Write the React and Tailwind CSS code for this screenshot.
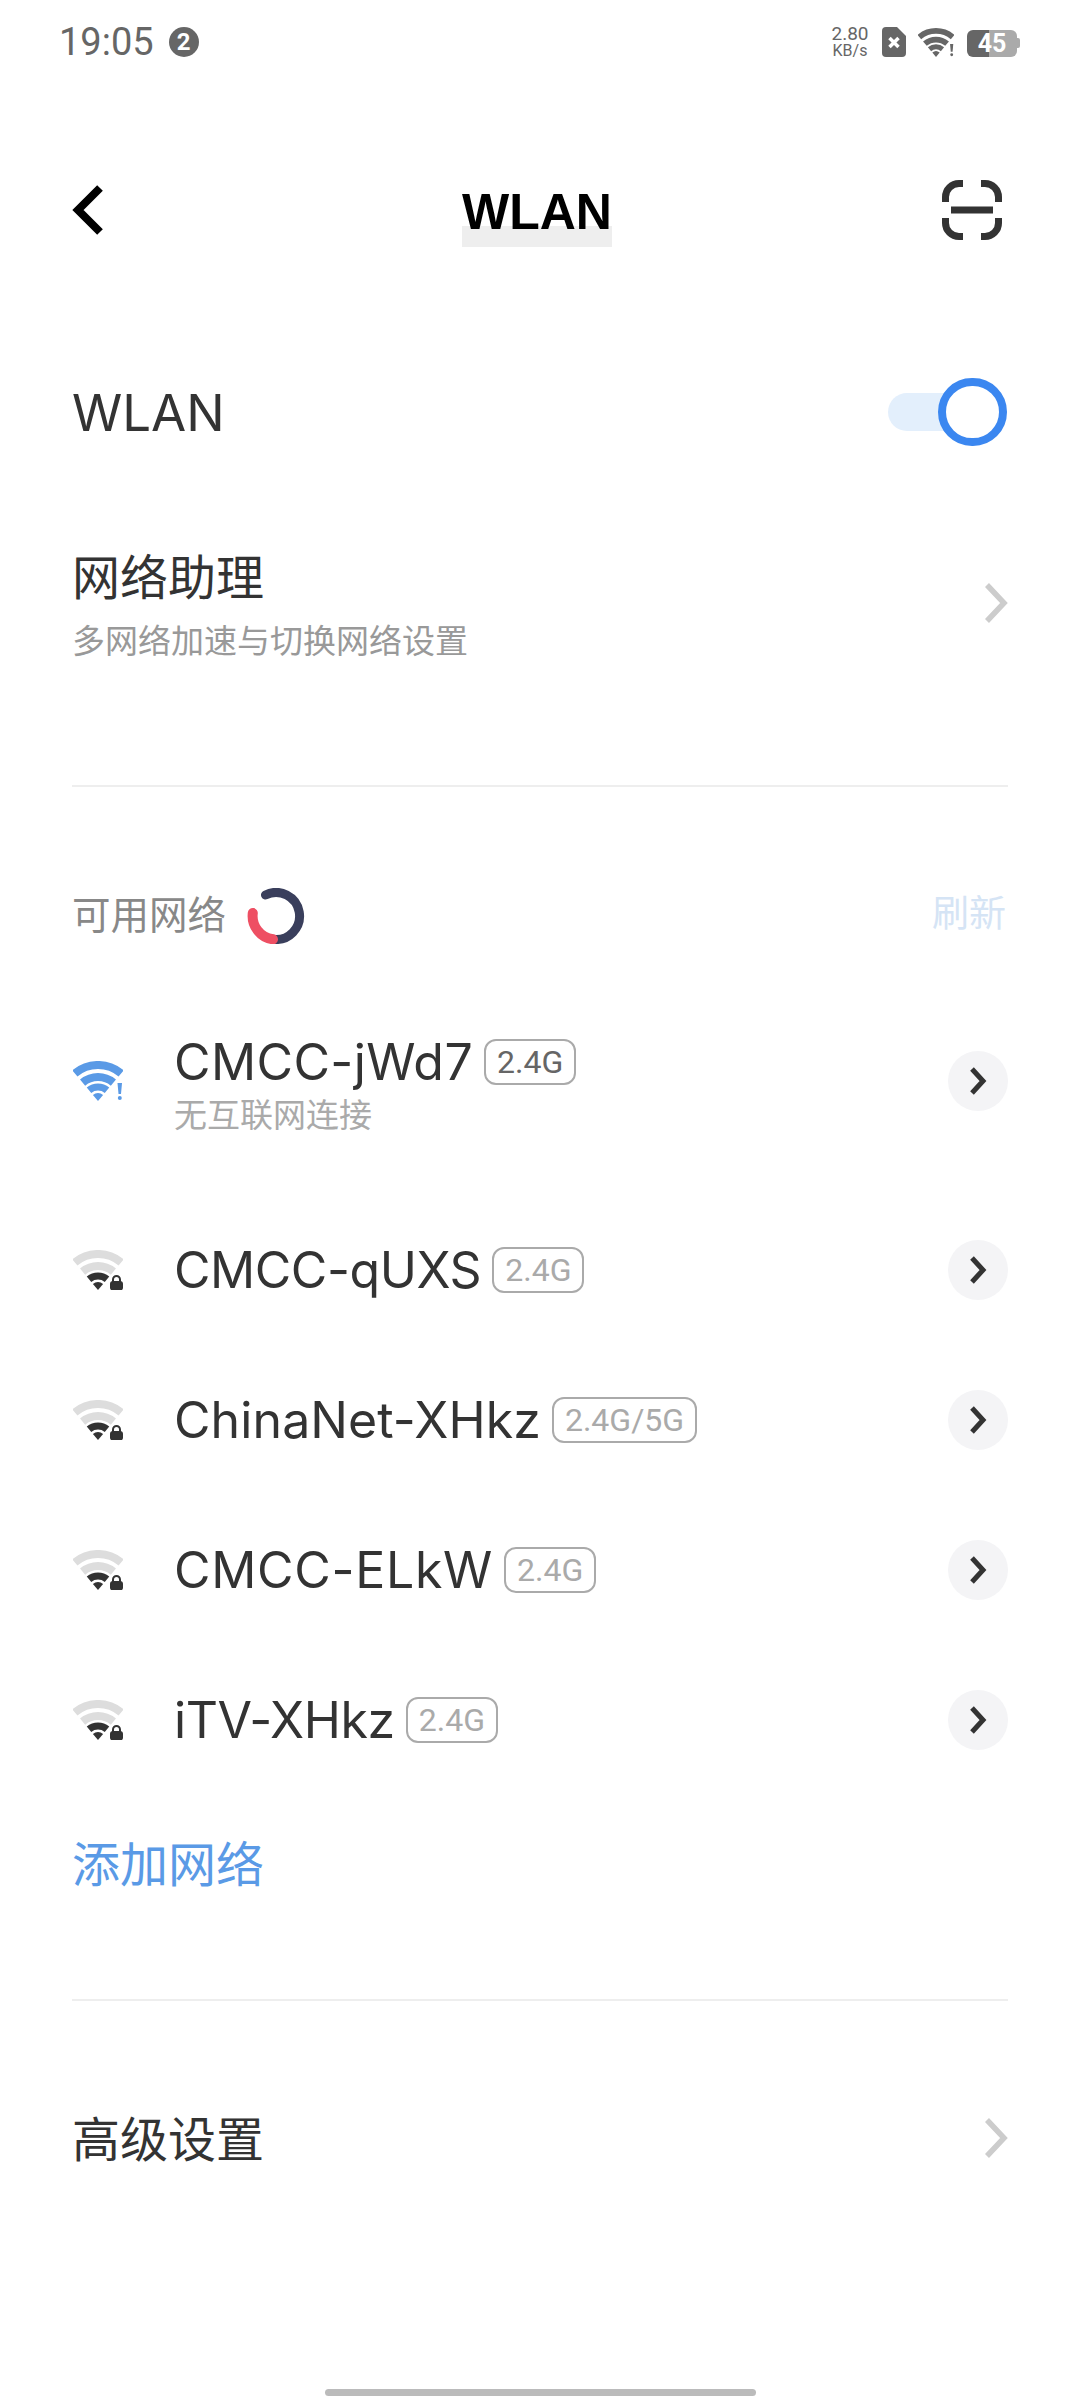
import React from "react";

const networks = [
  { name: "CMCC-qUXS", band: "2.4G", spacing: "tracking-[-0.45px]" },
  { name: "ChinaNet-XHkz", band: "2.4G/5G", spacing: "tracking-[0.1px]" },
  { name: "CMCC-ELkW", band: "2.4G", spacing: "tracking-[0.7px]" },
  { name: "iTV-XHkz", band: "2.4G", spacing: "tracking-[-0.4px]" },
];

const WifiBars = ({ top, low, children, className }) => (
  <svg viewBox="0 0 50 40" className={className}>
    <path d="M1.85 12.4A36 36 0 0 1 48.15 12.4" fill="none" stroke={top} strokeWidth="8" />
    <path d="M9.6 21.6A24 24 0 0 1 40.4 21.6" fill="none" stroke={top} strokeWidth="8" />
    <path d="M16 29.3A14 14 0 0 1 34 29.3" fill="none" stroke={low} strokeWidth="7" />
    <path d="M25 40L19.9 33.9A8 8 0 0 1 30.1 33.9Z" fill={low} />
    {children}
  </svg>
);

const Alert = ({ color }) => (
  <>
    <path d="M44.5 22H49L48 33H45.5Z" fill={color} />
    <circle cx="46.8" cy="37" r="2" fill={color} />
  </>
);

const Lock = () => (
  <>
    <path d="M40 32V29.5A3.5 3.5 0 0 1 47 29.5V32" fill="none" stroke="#333" strokeWidth="2" />
    <rect x="37" y="31" width="13" height="9.5" rx="3" fill="#333" />
  </>
);

const Tag = ({ children, dark }) => (
  <span
    className={`ml-[11px] flex h-[46px] items-center rounded-[12px] border-2 border-[#aaaaaa] px-[11px] font-['Roboto',sans-serif] text-[32px] ${
      dark ? "text-[#666666]" : "text-[#aaaaaa]"
    }`}
  >
    {children}
  </span>
);

const RoundArrow = () => (
  <span className="flex h-[60px] w-[60px] items-center justify-center rounded-full bg-[#f4f4f6]">
    <svg viewBox="0 0 20 30" className="h-[30px] w-[20px]">
      <path d="M4 3L15 15L4 27" fill="none" stroke="#333" strokeWidth="5" />
    </svg>
  </span>
);

const GrayArrow = () => (
  <svg viewBox="0 0 24 40" className="h-[40px] w-[24px]">
    <path d="M3 2L20 20L3 38" fill="none" stroke="#cccccc" strokeWidth="5.5" />
  </svg>
);

const App = () => {
  return (
    <div className="flex h-[2400px] w-[1080px] flex-col overflow-hidden bg-white font-['Inter','Noto_Sans_CJK_SC',sans-serif] text-[#333333]">
      {/* status bar */}
      <div className="flex h-[84px] items-center justify-between pl-[59px] pr-[60px] text-[#666666]">
        <div className="flex items-center">
          <span className="text-[38px] font-['Roboto',sans-serif]">19:05</span>
          <span className="ml-[15px] flex h-[30px] w-[30px] items-center justify-center rounded-full bg-[#666666] text-[24px] font-bold leading-none text-white font-['Roboto',sans-serif]">
            2
          </span>
        </div>
        <div className="flex items-center font-['Roboto',sans-serif]">
          <div className="flex w-[38px] flex-col items-center">
            <span className="text-[19px] leading-[18px]">2.80</span>
            <span className="text-[16px] leading-[16px]">KB/s</span>
          </div>
          <svg viewBox="0 0 24 30" className="ml-[13px] h-[30px] w-[24px]">
            <path d="M4 0H15L24 9V26A4 4 0 0 1 20 30H4A4 4 0 0 1 0 26V4A4 4 0 0 1 4 0Z" fill="#666" />
            <path d="M7.5 11L16.5 20M16.5 11L7.5 20" stroke="#fff" strokeWidth="3.5" />
          </svg>
          <WifiBars top="#666" low="#666" className="ml-[12px] h-[29px] w-[36px]">
            <Alert color="#666" />
          </WifiBars>
          <div className="ml-[13px] mt-[2px] flex items-center">
            <div className="flex h-[27px] w-[50px] items-center justify-center rounded-[6px] bg-[linear-gradient(to_right,#666666_44%,#aaaaaa_44%)] text-[25px] font-bold leading-none text-white">
              45
            </div>
            <span className="h-[10px] w-[3px] rounded-r-[2px] bg-[#aaaaaa]" />
          </div>
        </div>
      </div>

      {/* header */}
      <div className="mt-[66px] grid h-[120px] grid-cols-[1fr_auto_1fr] items-center pl-[72px] pr-[78px]">
        <svg viewBox="0 0 32 50" className="h-[50px] w-[32px]">
          <path d="M28 3L6 25L28 47" fill="none" stroke="#000" strokeWidth="8" />
        </svg>
        <h1 className="mt-[14px] flex flex-col text-[50px] font-bold text-black font-['Liberation_Sans',sans-serif]">
          <span className="relative z-10 leading-[50px]">WLAN</span>
          <span className="mt-[-11px] block h-[21px] w-full bg-[#eeeeee]" />
        </h1>
        <svg viewBox="0 0 60 60" className="h-[60px] w-[60px] justify-self-end">
          <g fill="none" stroke="#333" strokeWidth="7">
            <path d="M21 3.5H17A13.5 13.5 0 0 0 3.5 17V22" />
            <path d="M39 3.5H43A13.5 13.5 0 0 1 56.5 17V22" />
            <path d="M21 56.5H17A13.5 13.5 0 0 1 3.5 43V38" />
            <path d="M39 56.5H43A13.5 13.5 0 0 0 56.5 43V38" />
            <path d="M9 30H51" />
          </g>
        </svg>
      </div>

      {/* wlan switch */}
      <div className="mt-[83px] flex h-[120px] items-center justify-between pl-[72px] pr-[73px]">
        <span className="text-[51px]">WLAN</span>
        <div className="relative mb-[3px] h-[68px] w-[119px]">
          <span className="absolute left-0 top-[15px] h-[38px] w-[80px] rounded-full bg-[#e3effc]" />
          <span className="absolute right-0 top-0 h-[68px] w-[69px] rounded-full border-[8px] border-[#3b87f0] bg-white" />
        </div>
      </div>

      {/* network assistant */}
      <div className="mt-[50px] flex h-[160px] items-center justify-between pl-[72px] pr-[72px]">
        <div className="flex flex-col">
          <span className="text-[48px] leading-[76px]">网络助理</span>
          <span className="text-[33px] leading-[50px] text-[#999999]">多网络加速与切换网络设置</span>
        </div>
        <GrayArrow />
      </div>

      <div className="mx-[72px] mt-[102px] h-[2px] bg-[#eeeeee]" />

      {/* available networks */}
      <div className="mt-[82px] flex h-[90px] items-center justify-between pl-[72px] pr-[74px]">
        <div className="mt-[4px] flex items-center">
          <span className="text-[38.5px] text-[#888888]">可用网络</span>
          <svg viewBox="0 0 58 56" className="ml-[21px] h-[56px] w-[58px]">
            <path d="M18.5 7A23.5 23.5 0 1 1 26 51.3" fill="none" stroke="#3a3f5c" strokeWidth="9" strokeLinecap="round" />
            <path d="M26 51.3A23.5 23.5 0 0 1 5.8 25" fill="none" stroke="#ee4f63" strokeWidth="10" strokeLinecap="round" />
          </svg>
        </div>
        <span className="text-[37px] text-[#d5e4f5]">刷新</span>
      </div>

      <div className="mt-[36px] flex h-[172px] items-center pl-[73px] pr-[72px]">
        <WifiBars top="#5a9ae6" low="#5a9ae6" className="h-[40px] w-[50px]">
          <Alert color="#5a9ae6" />
        </WifiBars>
        <div className="ml-[51px] flex flex-1 flex-col">
          <div className="flex items-center">
            <span className="text-[50px] leading-[68px] tracking-[0.4px]">CMCC-jWd7</span>
            <Tag dark>2.4G</Tag>
          </div>
          <span className="text-[33px] leading-[38px] text-[#aaaaaa]">无互联网连接</span>
        </div>
        <RoundArrow />
      </div>

      <div className="mt-[28px] flex flex-col">
        {networks.map((n) => (
          <div key={n.name} className="flex h-[150px] items-center pl-[73px] pr-[72px]">
            <WifiBars top="#dddddd" low="#333" className="h-[40px] w-[50px]">
              <Lock />
            </WifiBars>
            <div className="ml-[51px] flex flex-1 items-center">
              <span className={`text-[50px] leading-[56px] ${n.spacing}`}>{n.name}</span>
              <Tag>{n.band}</Tag>
            </div>
            <RoundArrow />
          </div>
        ))}
      </div>

      <div className="mt-[22px] flex h-[96px] items-center pl-[72px] text-[48px] text-[#5a9ae6]">添加网络</div>

      <div className="mx-[72px] mt-[86px] h-[2px] bg-[#eeeeee]" />

      <div className="mt-[77px] flex h-[120px] items-center justify-between pl-[72px] pr-[72px]">
        <span className="mt-[3px] text-[48px]">高级设置</span>
        <GrayArrow />
      </div>

      {/* home indicator */}
      <div className="mx-auto mb-[4px] mt-auto h-[7px] w-[431px] rounded-full bg-[#bbbbbb]" />
    </div>
  );
};

export default App;
